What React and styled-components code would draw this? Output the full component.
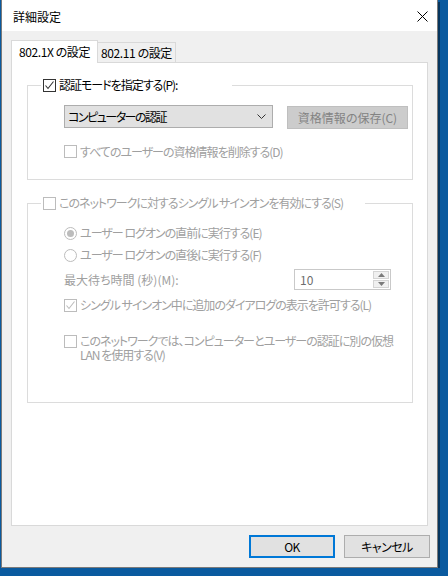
import styled, { createGlobalStyle } from "styled-components"

const GlobalStyle = createGlobalStyle`
  body {
    margin: 0;
    background: #0a5a9f;
    font-family: "Noto Sans CJK JP", "Noto Sans", sans-serif;
    font-size: 12px;
    font-feature-settings: "palt";
    color: #000;
  }
`

const Frame = styled.div`
  margin-left: 1px;
  width: 435px;
  height: 567px;
  border: 1px solid #7a7a7a;
  border-top: none;
  box-shadow: 2px 2px 0 rgba(0, 0, 0, 0.4);
  background: #f0f0f0;
  display: flex;
  flex-direction: column;
`

const TitleBar = styled.div`
  height: 31px;
  flex: none;
  background: #fff;
  display: flex;
  align-items: center;
  justify-content: space-between;
  padding: 2px 9px 0 11px;
  box-sizing: border-box;
`

const Body = styled.div`
  flex: 1;
  display: flex;
  flex-direction: column;
  padding: 9px;
`

const TabStrip = styled.div`
  height: 23px;
  margin-bottom: -1px;
  display: flex;
  align-items: flex-end;
  position: relative;
  z-index: 1;
`

const Tab = styled.div`
  box-sizing: border-box;
  width: ${(p) => p.$w}px;
  height: ${(p) => (p.$active ? 23 : 21)}px;
  border: 1px solid #d9d9d9;
  border-bottom: ${(p) => (p.$active ? "none" : "1px solid #d9d9d9")};
  background: ${(p) => (p.$active ? "#fff" : "#f0f0f0")};
  margin-left: ${(p) => (p.$active ? 0 : -1)}px;
  position: relative;
  z-index: ${(p) => (p.$active ? 2 : 1)};
  display: flex;
  align-items: center;
  justify-content: center;
  padding-bottom: ${(p) => (p.$active ? 1 : 0)}px;
  letter-spacing: -0.4px;
`

const Panel = styled.div`
  height: 464px;
  box-sizing: border-box;
  border: 1px solid #d9d9d9;
  background: #fff;
  padding: 15px 14px 0 15px;
`

const Group = styled.fieldset`
  margin: ${(p) => p.$mt || 0}px 0 0;
  border: 1px solid #dcdcdc;
  padding: 0 0 0 13px;
  min-width: 0;
`

const Legend = styled.legend`
  width: ${(p) => p.$w}px;
  box-sizing: border-box;
  height: 14px;
  padding: 0 2px;
  display: flex;
  align-items: center;
  gap: 3px;
  line-height: 14px;
`

const Content = styled.div`
  display: flex;
  flex-direction: column;
  padding: ${(p) => p.$pt}px 0 ${(p) => p.$pb}px 23px;
`

const Row = styled.div`
  display: flex;
  align-items: ${(p) => (p.$top ? "flex-start" : "center")};
  gap: ${(p) => (p.$gap == null ? 3 : p.$gap)}px;
  height: ${(p) => (p.$h ? `${p.$h}px` : "auto")};
  margin-top: ${(p) => p.$mt || 0}px;
`

const Label = styled.span`
  color: ${(p) => (p.$disabled ? "#a0a0a0" : "#000")};
  line-height: 14px;
  white-space: nowrap;
  letter-spacing: ${(p) => (p.$ls == null ? -1 : p.$ls)}px;
`

const Box = styled.span`
  flex: none;
  width: 13px;
  height: 13px;
  box-sizing: border-box;
  border: 1px solid ${(p) => (p.$disabled ? "#bcbcbc" : "#333")};
  background: #fff;
  display: inline-flex;
  margin-top: ${(p) => p.$mt || 0}px;
`

const Circle = styled.span`
  flex: none;
  width: 13px;
  height: 13px;
  box-sizing: border-box;
  border-radius: 50%;
  border: 1px solid #bcbcbc;
  background: #fff;
  display: inline-flex;
  align-items: center;
  justify-content: center;

  &::after {
    content: "";
    width: 7px;
    height: 7px;
    border-radius: 50%;
    background: ${(p) => (p.$checked ? "#bcbcbc" : "transparent")};
  }
`

const Combo = styled.div`
  width: 209px;
  height: 23px;
  box-sizing: border-box;
  border: 1px solid #adadad;
  background: #e1e1e1;
  display: flex;
  align-items: center;
  justify-content: space-between;
  padding: 0 6px 0 3px;
  letter-spacing: -1.5px;
`

const GrayButton = styled.div`
  width: 121px;
  height: 23px;
  box-sizing: border-box;
  margin-top: 1px;
  border: 1px solid #bfbfbf;
  background: #cccccc;
  color: #838383;
  display: flex;
  align-items: center;
  justify-content: center;
`

const WaitRow = styled(Row)`
  width: 327px;
  justify-content: space-between;
`

const SpinBox = styled.div`
  width: 97px;
  height: 21px;
  box-sizing: border-box;
  border: 1px solid #c9c9c9;
  background: #fff;
  display: flex;
  align-items: stretch;
  justify-content: space-between;
  padding: 1px 1px 1px 5px;
  color: #6d6d6d;
`

const SpinValue = styled.span`
  align-self: center;
`

const SpinButtons = styled.div`
  width: 16px;
  display: flex;
  flex-direction: column;
  gap: 1px;
`

const SpinButton = styled.div`
  flex: 1;
  box-sizing: border-box;
  border: 1px solid #d4d4d4;
  background: #f0f0f0;
  display: flex;
  align-items: center;
  justify-content: center;
`

const Footer = styled.div`
  display: flex;
  justify-content: flex-end;
  gap: 9px;
  margin: 9px -2px 0 0;
`

const Button = styled.div`
  width: 86px;
  height: 23px;
  box-sizing: border-box;
  border: ${(p) => (p.$default ? "2px solid #0078d7" : "1px solid #adadad")};
  background: #e1e1e1;
  display: flex;
  align-items: center;
  justify-content: center;
  letter-spacing: -0.5px;
`

const Check = ({ checked, disabled, mt }) => (
  <Box $disabled={disabled} $mt={mt}>
    {checked && (
      <svg width="11" height="11" viewBox="0 0 11 11">
        <path d="M1.5 5.5 L4 8.5 L9.5 1.5" fill="none" stroke={disabled ? "#bcbcbc" : "#333"} strokeWidth="1.1" />
      </svg>
    )}
  </Box>
)

const Arrow = ({ up }) => (
  <svg width="7" height="4" viewBox="0 0 7 4">
    <path d={up ? "M0 4 L3.5 0 L7 4 Z" : "M0 0 L3.5 4 L7 0 Z"} fill="#7a7a7a" />
  </svg>
)

export default function App() {
  return (
    <>
      <GlobalStyle />
      <Frame>
        <TitleBar>
          <span>詳細設定</span>
          <svg width="11" height="11" viewBox="0 0 11 11">
            <path d="M0.5 0.5 L10.5 10.5 M10.5 0.5 L0.5 10.5" stroke="#000" strokeWidth="1" />
          </svg>
        </TitleBar>
        <Body>
          <TabStrip>
            <Tab $active $w={87}>802.1X の設定</Tab>
            <Tab $w={79}>802.11 の設定</Tab>
          </TabStrip>
          <Panel>
            <Group>
              <Legend $w={191}>
                <Check checked />
                <Label>認証モードを指定する(P):</Label>
              </Legend>
              <Content $pt={13} $pb={19}>
                <Row $top $gap={14}>
                  <Combo>
                    <span>コンピューターの認証</span>
                    <svg width="9" height="6" viewBox="0 0 9 6">
                      <path d="M0.5 0.5 L4.5 4.5 L8.5 0.5" fill="none" stroke="#333" strokeWidth="1" />
                    </svg>
                  </Combo>
                  <GrayButton>資格情報の保存(C)</GrayButton>
                </Row>
                <Row $h={17} $mt={14}>
                  <Check disabled />
                  <Label $disabled>すべてのユーザーの資格情報を削除する(D)</Label>
                </Row>
              </Content>
            </Group>
            <Group $mt={16}>
              <Legend $w={324}>
                <Check disabled />
                <Label $disabled>このネットワークに対するシングル サインオンを有効にする(S)</Label>
              </Legend>
              <Content $pt={14} $pb={40}>
                <Row $h={18}>
                  <Circle $checked />
                  <Label $disabled>ユーザー ログオンの直前に実行する(E)</Label>
                </Row>
                <Row $h={18} $mt={4}>
                  <Circle />
                  <Label $disabled>ユーザー ログオンの直後に実行する(F)</Label>
                </Row>
                <WaitRow $h={21} $mt={5}>
                  <Label $disabled $ls={0}>最大待ち時間 (秒)(M):</Label>
                  <SpinBox>
                    <SpinValue>10</SpinValue>
                    <SpinButtons>
                      <SpinButton><Arrow up /></SpinButton>
                      <SpinButton><Arrow /></SpinButton>
                    </SpinButtons>
                  </SpinBox>
                </WaitRow>
                <Row $h={18} $mt={6}>
                  <Check checked disabled />
                  <Label $disabled>シングル サインオン中に追加のダイアログの表示を許可する(L)</Label>
                </Row>
                <Row $top $mt={20}>
                  <Check disabled mt={1} />
                  <Label $disabled>
                    このネットワークでは、コンピューターとユーザーの認証に別の仮想
                    <br />
                    LAN を使用する(V)
                  </Label>
                </Row>
              </Content>
            </Group>
          </Panel>
          <Footer>
            <Button $default>OK</Button>
            <Button>キャンセル</Button>
          </Footer>
        </Body>
      </Frame>
    </>
  )
}
